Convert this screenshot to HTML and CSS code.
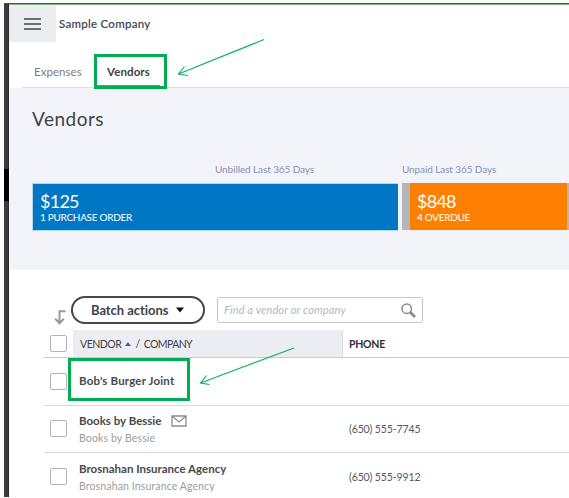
FILE: index.html
```html
<!DOCTYPE html>
<html lang="en">
<head>
<meta charset="utf-8">
<title>Vendors</title>
<link rel="stylesheet" href="styles.css">
</head>
<body>
<div class="app">
  <div class="rail"><span class="rail-mark"></span></div>
  <main class="page">
    <header class="topbar">
      <div class="menu"><i></i><i></i><i></i></div>
      <span class="company">Sample Company</span>
    </header>
    <nav class="tabs">
      <span class="tab tab-expenses">Expenses</span>
      <span class="tab tab-active">Vendors</span>
    </nav>
    <section class="hero">
      <h1>Vendors</h1>
      <div class="money">
        <div class="group unbilled">
          <div class="label"><span class="label-unbilled">Unbilled Last 365 Days</span></div>
          <div class="bar blue"><b class="amount">$125</b><span class="note note-po">1 PURCHASE ORDER</span></div>
        </div>
        <div class="group unpaid">
          <div class="label"><span class="label-unpaid">Unpaid Last 365 Days</span></div>
          <div class="bar orange"><b class="amount">$848</b><span class="note note-od">4 OVERDUE</span></div>
        </div>
      </div>
    </section>
    <section class="list">
      <div class="toolbar">
        <svg class="turn" width="12" height="15" viewBox="0 0 12 15"><path d="M11.5 1.2H5.5V12.5M1.2 8.8l4.3 4.4 4.3-4.4" fill="none" stroke="#999" stroke-width="2"/></svg>
        <div class="batch"><span>Batch actions</span><svg width="8" height="6" viewBox="0 0 8 6"><path d="M0 .5h8L4 5.5z" fill="#111"/></svg></div>
        <div class="search"><span>Find a vendor or company</span><svg width="15" height="15" viewBox="0 0 15 15"><circle cx="5.7" cy="5.7" r="4.7" fill="none" stroke="#8c8c8c" stroke-width="1.5"/><path d="M9 9l5 5" stroke="#8c8c8c" stroke-width="2.8"/></svg></div>
      </div>
      <div class="row head">
        <i class="check"></i>
        <div class="cell"><span class="th-vendor">VENDOR</span><svg width="6" height="4" viewBox="0 0 6 4"><path d="M3 0l3 4H0z" fill="#41638c"/></svg><span class="th-company">/&nbsp; COMPANY</span></div>
        <div class="phone th-phone">PHONE</div>
      </div>
      <div class="row bob">
        <i class="check"></i>
        <div class="cell"><span class="name n-bob">Bob's Burger Joint</span></div>
      </div>
      <div class="row">
        <i class="check"></i>
        <div class="cell">
          <div class="line"><span class="name n-books">Books by Bessie</span><svg width="16" height="12" viewBox="0 0 16 12"><path d="M1 1h14v10H1zM1 1l7 6 7-6" fill="none" stroke="#8d8d8d" stroke-width="1.3"/></svg></div>
          <span class="sub s-books">Books by Bessie</span>
        </div>
        <div class="phone">(650) 555-7745</div>
      </div>
      <div class="row last">
        <i class="check"></i>
        <div class="cell">
          <div class="line"><span class="name n-bros">Brosnahan Insurance Agency</span></div>
          <span class="sub s-bros">Brosnahan Insurance Agency</span>
        </div>
        <div class="phone">(650) 555-9912</div>
      </div>
    </section>
  </main>
</div>
<div class="callout callout-tab"></div>
<div class="callout callout-row"></div>
<svg class="arrow arrow-tab" width="90" height="42" viewBox="0 0 90 42"><path d="M88 2.5L2.5 37M8.5 29.5L2.5 37l9.5 1.5" /></svg>
<svg class="arrow arrow-row" width="98" height="42" viewBox="0 0 98 42"><path d="M95 3L1.5 38M7.5 30.5L1.5 38l9 1.5" /></svg>
</body>
</html>
```
FILE: styles.css
```css
* { box-sizing: border-box; }
body {
  margin: 0;
  width: 569px;
  height: 498px;
  overflow: hidden;
  background: #fff;
  color: #414246;
  font: 11.5px/14px Lato, "Liberation Sans", sans-serif;
  position: relative;
}
.app { display: flex; margin: 3px 0 0 4px; height: 494px; border-top: 1px solid #167c12; }
.rail { width: 5px; background: #3b3b3f; border-right: 1px solid #29292b; padding-top: 165px; }
.rail-mark { display: block; height: 32px; width: 5px; background: #000; }
.page { flex: 1; min-width: 0; border-top: 1px solid #80b77b; padding-left: 1px; }
span { white-space: nowrap; }

.topbar { display: flex; height: 37px; }
.menu { width: 47px; margin-left: -1px; background: #ecedf1; padding: 13px 0 0 15px; }
.menu i { display: block; width: 17px; height: 2px; margin-bottom: 3px; background: #6d6e73; }
.company { margin: 12px 0 0 3px; font-weight: 500; letter-spacing: .27px; -webkit-text-stroke: .1px; }

.tabs { display: flex; height: 46px; margin-left: 12px; padding: 23px 0 0 12px; border-bottom: 1px solid #dcdee1; }
.tab-expenses { width: 73px; color: #7b7c80; letter-spacing: .05px; }
.tab-active { font-weight: 700; letter-spacing: .1px; }

.hero { height: 182px; background: #f3f4f9; padding: 19px 0 0 22px; }
h1 { margin: 0; font-size: 19px; line-height: 24px; font-weight: 400; letter-spacing: .5px; }
.money { display: flex; gap: 4px; margin-top: 31px; }
.unbilled { width: 366px; }
.unpaid { flex: 1; }
.label { height: 20px; line-height: 14px; margin-bottom: 1px; font-size: 10px; letter-spacing: -.1px; color: #8790b2; }
.label-unbilled { margin-left: 183px; }
.bar { height: 47px; padding: 8px 0 0 7px; color: #fff; border: 1px solid #b4d7ed; border-width: 1px 0 0 1px; }
.blue { background: #0077c5; box-shadow: 0 1px #b4d7ed; }
.orange { background: #ff8000; border: 0 solid #b4b6ba; border-width: 0 2px 0 8px; padding-top: 9px; }
.amount { display: block; font-size: 18px; line-height: 18px; font-weight: 400; letter-spacing: -.75px; }
.note { display: block; font-size: 10px; line-height: 14px; letter-spacing: -.3px; }

.list { padding-left: 34px; }
.toolbar { display: flex; height: 60px; padding-top: 26px; }
.turn { margin: 14px 5px 0 10px; }
.batch { display: flex; align-items: center; width: 134px; height: 28px; border: 2px solid #47484b; border-radius: 14px; padding-left: 18px; gap: 8px; font-size: 13px; font-weight: 700; letter-spacing: -.05px; }
.search { display: flex; align-items: center; justify-content: space-between; width: 206px; height: 26px; margin: 1px 0 0 12px; border: 1px solid #c7c8cf; border-radius: 2px; padding: 0 6px 0 6px; color: #b4b7c0; font-size: 11px; font-style: italic; letter-spacing: .17px; }
.row { display: flex; align-items: center; height: 47.5px; border-bottom: 1px solid #d6d7da; padding-left: 6px; }
.check { width: 17px; height: 17px; flex: none; border: 1px solid #b3b4b9; border-radius: 2px; background: #fff; }
.cell { width: 270px; margin-left: 6px; padding-left: 6px; flex: none; }
.head { height: 28px; border-bottom-color: #c9ccd4; }
.head .cell { display: flex; align-items: center; gap: 4px; height: 27px; padding-left: 7px; background: #ecedf2; border-right: 1px solid #dcdee4; font-size: 10.5px; letter-spacing: -.6px; }
.head .th-vendor { letter-spacing: -.45px; }
.phone { margin-left: 6px; font-size: 10.5px; letter-spacing: -.12px; color: #56575b; }
.th-phone { margin-left: 6px; font-weight: 700; letter-spacing: -.25px; color: #303135; }
.name { font-weight: 700; color: #48494d; }
.n-bob { letter-spacing: .17px; }
.line { display: flex; align-items: center; gap: 10px; height: 17px; }
.sub { display: block; height: 16px; line-height: 18px; font-size: 10.5px; letter-spacing: .13px; color: #9b9ca0; }
.last { border: 0; }

.callout { position: absolute; border: 3px solid #00ad50; }
.callout-tab { left: 94px; top: 54px; width: 73px; height: 35px; }
.callout-tab::after { content: ""; position: absolute; left: 0; right: 4px; bottom: 0; height: 1px; background: #53b700; }
.callout-row { left: 68px; top: 358px; width: 122px; height: 43px; }
.arrow { position: absolute; fill: none; stroke: #12b45c; stroke-width: 1.2; }
.arrow-tab { left: 176px; top: 37px; }
.arrow-row { left: 199px; top: 345px; }
```
